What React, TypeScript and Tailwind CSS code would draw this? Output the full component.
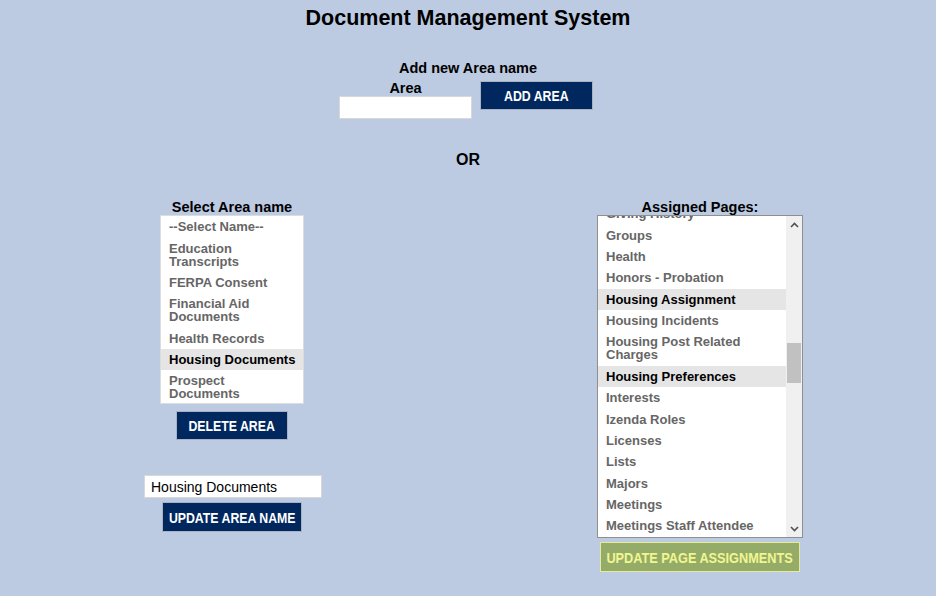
import React from "react";

const areas: { lines: string[]; selected?: boolean }[] = [
  { lines: ["--Select Name--"] },
  { lines: ["Education", "Transcripts"] },
  { lines: ["FERPA Consent"] },
  { lines: ["Financial Aid", "Documents"] },
  { lines: ["Health Records"] },
  { lines: ["Housing Documents"], selected: true },
  { lines: ["Prospect", "Documents"] },
];

const pages: { lines: string[]; selected?: boolean }[] = [
  { lines: ["Giving History"] },
  { lines: ["Groups"] },
  { lines: ["Health"] },
  { lines: ["Honors - Probation"] },
  { lines: ["Housing Assignment"], selected: true },
  { lines: ["Housing Incidents"] },
  { lines: ["Housing Post Related", "Charges"] },
  { lines: ["Housing Preferences"], selected: true },
  { lines: ["Interests"] },
  { lines: ["Izenda Roles"] },
  { lines: ["Licenses"] },
  { lines: ["Lists"] },
  { lines: ["Majors"] },
  { lines: ["Meetings"] },
  { lines: ["Meetings Staff Attendee"] },
  { lines: ["Mentors"] },
];

function Option({ lines, selected }: { lines: string[]; selected?: boolean }) {
  return (
    <div
      className={`pl-[8px] pr-[4px] py-[4.2px] text-[13px] leading-[13px] font-bold whitespace-nowrap ${
        selected ? "bg-[#e5e5e5] text-black" : "text-[#666666]"
      }`}
    >
      {lines.map((l, i) => (
        <div key={i}>{l}</div>
      ))}
    </div>
  );
}

// the buttons use a narrow bold face; squeeze Liberation Sans to match
function NavyButton({ label, className }: { label: string; className: string }) {
  return (
    <button
      className={`bg-[#00285f] border border-[#aab2c0] text-white font-bold text-[15px] leading-[17px] flex items-center justify-center ${className}`}
    >
      <span className="inline-block whitespace-nowrap scale-x-[0.82]">{label}</span>
    </button>
  );
}

export default function App() {
  return (
    <div className="min-h-[596px] bg-[#bccae2] text-black font-['Liberation_Sans',Arial,sans-serif]">
      <h1 className="text-center text-[21.5px] leading-[24px] font-bold pt-[6px]">Document Management System</h1>

      {/* Add area */}
      <div className="mt-[30px] text-center text-[14.5px] leading-[16px] font-bold">Add new Area name</div>
      <div className="mt-[4px] pr-[4px] flex justify-center items-start gap-[8px]">
        <div className="flex flex-col items-center w-[133px]">
          <div className="text-[14.5px] leading-[16px] font-bold">Area</div>
          <input className="w-[133px] h-[23px] bg-white border border-[#d8d8d8] outline-none" />
        </div>
        <NavyButton label="ADD AREA" className="w-[113px] h-[29px] mt-[1px]" />
      </div>

      <div className="mt-[32px] text-center text-[16px] leading-[18px] font-bold">OR</div>

      <div className="mt-[30px] flex">
        {/* Left column */}
        <div className="ml-[132px] w-[200px] flex flex-col items-center">
          <div className="text-[14.5px] leading-[16px] font-bold">Select Area name</div>
          <div className="w-[144px] h-[189px] bg-white border border-[#dcdcdc] overflow-hidden">
            {areas.map((a, i) => (
              <Option key={i} lines={a.lines} selected={a.selected} />
            ))}
          </div>
          <NavyButton label="DELETE AREA" className="mt-[7px] w-[112px] h-[29px]" />
          <input
            defaultValue="Housing Documents"
            className="mt-[35px] ml-[2px] w-[178px] h-[23px] bg-white border border-[#d8d8d8] px-[6px] text-[14px] text-black outline-none"
          />
          <NavyButton label="UPDATE AREA NAME" className="mt-[4px] w-[140px] h-[30px]" />
        </div>

        {/* Right column */}
        <div className="ml-[258px] w-[220px] flex flex-col items-center">
          <div className="text-[14.5px] leading-[16px] font-bold">Assigned Pages:</div>
          <div className="w-[206px] h-[323px] bg-white border border-[#8f8f8f] flex overflow-hidden">
            <div className="flex-1 overflow-hidden">
              <div className="-mt-[13px]">
                {pages.map((p, i) => (
                  <Option key={i} lines={p.lines} selected={p.selected} />
                ))}
              </div>
            </div>
            <div className="w-[16px] bg-[#f0f0f0] flex flex-col">
              <div className="h-[17px] flex items-center justify-center">
                <svg width="9" height="6" viewBox="0 0 9 6">
                  <path d="M1 5 L4.5 1.5 L8 5" fill="none" stroke="#505050" strokeWidth="1.6" />
                </svg>
              </div>
              <div className="h-[110px]" />
              <div className="h-[40px] mx-[1px] bg-[#c1c1c1]" />
              <div className="flex-1" />
              <div className="h-[17px] flex items-center justify-center">
                <svg width="9" height="6" viewBox="0 0 9 6">
                  <path d="M1 1 L4.5 4.5 L8 1" fill="none" stroke="#505050" strokeWidth="1.6" />
                </svg>
              </div>
            </div>
          </div>
          <button className="mt-[4px] w-[200px] h-[30px] bg-[#95ac69] border border-[#e6eb9c] text-[#f2f690] font-bold text-[15.5px] leading-[17px] flex items-center justify-center">
            <span className="inline-block whitespace-nowrap scale-x-[0.82]">UPDATE PAGE ASSIGNMENTS</span>
          </button>
        </div>
      </div>
    </div>
  );
}
